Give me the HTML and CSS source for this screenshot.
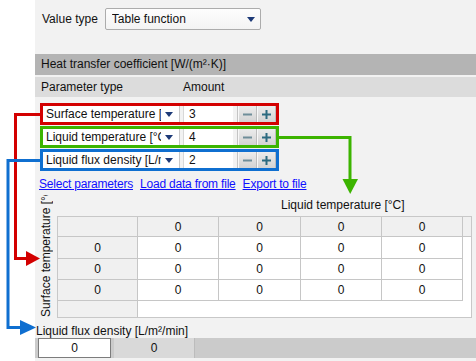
FILE: index.html
```html
<!DOCTYPE html>
<html>
<head>
    <title>Heat transfer coefficient</title>
    <meta name="viewport" content="width=device-width, initial-scale=1">
    <link rel="stylesheet" href="styles.css">
</head>
<body>
    <div class="screen">
        <div class="gutter"></div>
        <div class="panel">
            <div class="value-row">
                <span class="label">Value type</span>
                <div class="select select-wide">
                    <span class="select-text">Table function</span>
                    <svg class="caret" width="8" height="5" viewBox="0 0 8 5"><path d="M0 0H8L4 5Z"/></svg>
                </div>
            </div>

            <div class="section-title">Heat transfer coefficient [W/(m²·K)]</div>
            <div class="col-head">
                <span class="col-param">Parameter type</span>
                <span>Amount</span>
            </div>

            <div class="params">
                <div class="param param-red">
                    <div class="select select-small">
                        <span class="select-text">Surface temperature [°C]</span>
                        <svg class="caret" width="8" height="5" viewBox="0 0 8 5"><path d="M0 0H8L4 5Z"/></svg>
                    </div>
                    <div class="num">3</div>
                    <div class="spin">
                        <span class="btn"><svg width="9" height="9" viewBox="0 0 9 9"><rect class="minus" x="0" y="3.5" width="9" height="2"/></svg></span>
                        <span class="btn"><svg width="9" height="9" viewBox="0 0 9 9"><rect class="plus" x="0" y="3.5" width="9" height="2"/><rect class="plus" x="3.5" y="0" width="2" height="9"/></svg></span>
                    </div>
                </div>
                <div class="param param-green">
                    <div class="select select-small">
                        <span class="select-text">Liquid temperature [°C]</span>
                        <svg class="caret" width="8" height="5" viewBox="0 0 8 5"><path d="M0 0H8L4 5Z"/></svg>
                    </div>
                    <div class="num">4</div>
                    <div class="spin">
                        <span class="btn"><svg width="9" height="9" viewBox="0 0 9 9"><rect class="minus" x="0" y="3.5" width="9" height="2"/></svg></span>
                        <span class="btn"><svg width="9" height="9" viewBox="0 0 9 9"><rect class="plus" x="0" y="3.5" width="9" height="2"/><rect class="plus" x="3.5" y="0" width="2" height="9"/></svg></span>
                    </div>
                </div>
                <div class="param param-blue">
                    <div class="select select-small">
                        <span class="select-text">Liquid flux density [L/m²/min]</span>
                        <svg class="caret" width="8" height="5" viewBox="0 0 8 5"><path d="M0 0H8L4 5Z"/></svg>
                    </div>
                    <div class="num">2</div>
                    <div class="spin">
                        <span class="btn"><svg width="9" height="9" viewBox="0 0 9 9"><rect class="minus" x="0" y="3.5" width="9" height="2"/></svg></span>
                        <span class="btn"><svg width="9" height="9" viewBox="0 0 9 9"><rect class="plus" x="0" y="3.5" width="9" height="2"/><rect class="plus" x="3.5" y="0" width="2" height="9"/></svg></span>
                    </div>
                </div>
            </div>

            <div class="links">
                <a href="#">Select parameters</a>
                <a href="#">Load data from file</a>
                <a href="#">Export to file</a>
            </div>

            <div class="plot">
                <div class="axis-y"><span>Surface temperature [°C]</span></div>
                <div class="axis-x">Liquid temperature [°C]</div>
                <div class="grid">
                    <div class="cell head"></div>
                    <div class="cell head">0</div>
                    <div class="cell head">0</div>
                    <div class="cell head">0</div>
                    <div class="cell head">0</div>
                    <div class="cell head filler"></div>

                    <div class="cell head">0</div>
                    <div class="cell">0</div>
                    <div class="cell">0</div>
                    <div class="cell">0</div>
                    <div class="cell">0</div>
                    <div class="cell blank"></div>

                    <div class="cell head">0</div>
                    <div class="cell">0</div>
                    <div class="cell">0</div>
                    <div class="cell">0</div>
                    <div class="cell">0</div>
                    <div class="cell blank"></div>

                    <div class="cell head">0</div>
                    <div class="cell">0</div>
                    <div class="cell">0</div>
                    <div class="cell">0</div>
                    <div class="cell">0</div>
                    <div class="cell blank"></div>

                    <div class="cell head last"></div>
                    <div class="cell blank rest"></div>
                </div>
            </div>

            <div class="axis-z">Liquid flux density [L/m²/min]</div>
            <div class="bottom-row">
                <div class="cell-edit">0</div>
                <div class="cell-read">0</div>
            </div>
        </div>
    </div>

    <!-- connector arrows drawn over the form -->
    <svg class="arrows" width="476" height="361" viewBox="0 0 476 361">
        <polyline class="line-red" points="40,114.5 15.5,114.5 15.5,258.5 27,258.5"/>
        <path class="fill-red" d="M26 251L40 258.5L26 266Z"/>
        <polyline class="line-green" points="279,137.5 350,137.5 350,180"/>
        <path class="fill-green" d="M342.5 179H358L350.2 194Z"/>
        <polyline class="line-blue" points="40,160.5 8,160.5 8,327.5 21,327.5"/>
        <path class="fill-blue" d="M20 320L36 327.5L20 335Z"/>
    </svg>
</body>
</html>
```

FILE: styles.css
```css
body {
    margin: 0;
    font-family: "Liberation Sans", Arial, sans-serif;
    font-size: 12px;
    color: #111111;
    background-color: #ffffff;
    position: relative;
    width: 476px;
    height: 361px;
    overflow: hidden;
}
.screen {
    display: flex;
    height: 361px;
}
.gutter {
    width: 35px;
    flex: 0 0 35px;
    background-color: #ffffff;
}
.panel {
    flex: 1;
    display: flex;
    flex-direction: column;
    background-color: #f2f2f2;
}
.value-row {
    display: flex;
    align-items: center;
    margin-top: 8px;
    padding-left: 7px;
    height: 22px;
}
.label {
    margin-right: 7px;
}
.select {
    display: flex;
    align-items: center;
    background-color: #ffffff;
    box-sizing: border-box;
}
.select-wide {
    width: 156px;
    height: 22px;
    border: 1px solid #acacac;
    border-radius: 2px;
    background: linear-gradient(#fdfdfd, #f3f3f3);
    padding: 0 5px 0 6px;
}
.select-text {
    flex: 1;
    white-space: nowrap;
    overflow: hidden;
}
.caret {
    flex: 0 0 8px;
    fill: #1d3a78;
}
.section-title {
    margin-top: 24px;
    height: 21px;
    line-height: 21px;
    background-color: #b4b4b4;
    padding-left: 6px;
}
.col-head {
    margin-top: 2px;
    height: 20px;
    line-height: 20px;
    background-color: #dcdcdc;
    padding-left: 6px;
    display: flex;
}
.col-param {
    width: 142px;
}
.params {
    margin-top: 6px;
    margin-left: 5px;
    display: flex;
    flex-direction: column;
    gap: 1px;
}
.param {
    width: 239px;
    height: 22px;
    box-sizing: border-box;
    border: 3px solid;
    display: flex;
    align-items: stretch;
    background-color: #f2f2f2;
}
.param-red {
    border-color: #d30000;
}
.param-green {
    border-color: #3cb400;
}
.param-blue {
    border-color: #0f6fd0;
}
.select-small {
    width: 137px;
    padding: 0 6px 0 3px;
    border-right: 1px solid #c9c9c9;
}
.select-small .select-text {
    margin-right: 4px;
}
.num {
    width: 50px;
    margin-left: 3px;
    padding-left: 5px;
    background-color: #ffffff;
    line-height: 16px;
    border-left: 1px solid #d8d8d8;
}
.spin {
    display: flex;
    margin-left: 4px;
    border-left: 1px solid #c4c4c4;
}
.btn {
    width: 19px;
    display: flex;
    align-items: center;
    justify-content: center;
    background: linear-gradient(#ececec, #d3d3d3);
    border-left: 1px solid #f8f8f8;
    border-right: 1px solid #bdbdbd;
    box-sizing: border-box;
}
.minus {
    fill: #6f8e99;
}
.plus {
    fill: #2c6b80;
}
.links {
    margin-top: 6px;
    padding-left: 4px;
    height: 14px;
    line-height: 14px;
    display: flex;
    gap: 7px;
    letter-spacing: -0.2px;
}
.links a {
    color: #1010ff;
    text-decoration: underline;
}
.plot {
    margin-top: 4px;
    display: grid;
    grid-template-columns: 22px 415px;
    grid-template-rows: 21px 102px;
}
.axis-y {
    grid-row: 1 / 3;
    grid-column: 1;
    overflow: hidden;
    writing-mode: vertical-rl;
    transform: rotate(180deg);
    white-space: nowrap;
    text-align: left;
    line-height: 22px;
    padding-top: 1px;
}
.axis-x {
    grid-row: 1;
    grid-column: 2;
    padding-left: 224px;
    line-height: 20px;
    white-space: nowrap;
}
.grid {
    grid-row: 2;
    grid-column: 2;
    display: grid;
    grid-template-columns: 80px 81px 82px 81px 81px 8px;
    grid-template-rows: 20px 22px 21px 21px 16px;
    border: 1px solid #c8c8c8;
    background-color: #ffffff;
}
.cell {
    box-sizing: border-box;
    border-right: 1px solid #c6c6c6;
    border-bottom: 1px solid #c6c6c6;
    display: flex;
    align-items: center;
    justify-content: center;
}
.head {
    background-color: #f0f0f0;
}
.filler {
    border-right: none;
}
.blank {
    border: none;
}
.last {
    border-bottom: none;
}
.rest {
    grid-column: 2 / 7;
}
.axis-z {
    margin-top: 6px;
    padding-left: 1px;
    height: 14px;
    line-height: 14px;
    white-space: nowrap;
}
.bottom-row {
    display: flex;
    height: 20px;
    background-color: #cbcbcb;
    padding-left: 3px;
    border-bottom: 4px solid #f2f2f2;
}
.cell-edit {
    width: 73px;
    box-sizing: border-box;
    border: 1px solid #7c7c7c;
    background-color: #ffffff;
    text-align: center;
    line-height: 18px;
}
.cell-read {
    width: 80px;
    margin-left: 3px;
    background-color: #d9d9d9;
    border-right: 1px solid #bcbcbc;
    text-align: center;
    line-height: 20px;
}
.arrows {
    position: absolute;
    top: 0;
    left: 0;
    pointer-events: none;
}
.arrows polyline {
    fill: none;
    stroke-width: 3;
}
.line-red {
    stroke: #d30000;
}
.line-green {
    stroke: #3cb400;
}
.line-blue {
    stroke: #0f6fd0;
}
.fill-red {
    fill: #d30000;
}
.fill-green {
    fill: #3cb400;
}
.fill-blue {
    fill: #0f6fd0;
}
```
